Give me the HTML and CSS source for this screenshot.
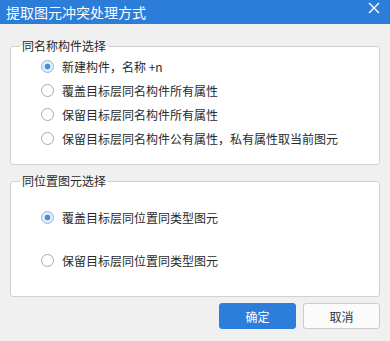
FILE: index.html
```html
<!DOCTYPE html>
<html lang="zh-CN">
<head>
<meta charset="utf-8">
<title>提取图元冲突处理方式</title>
<link rel="stylesheet" href="styles.css">
</head>
<body>
<div class="dialog">
  <div class="titlebar">
    <span class="title">提取图元冲突处理方式</span>
    <svg class="close" width="12" height="12" viewBox="0 0 12 12"><path d="M1 1 L11 11 M11 1 L1 11" stroke="#fff" stroke-width="1.4" fill="none"/></svg>
  </div>
  <div class="body">
    <fieldset class="group group1">
      <legend>同名称构件选择</legend>
      <label class="row"><span class="radio checked"></span><span>新建构件，名称 +n</span></label>
      <label class="row"><span class="radio"></span><span>覆盖目标层同名构件所有属性</span></label>
      <label class="row"><span class="radio"></span><span>保留目标层同名构件所有属性</span></label>
      <label class="row"><span class="radio"></span><span>保留目标层同名构件公有属性，私有属性取当前图元</span></label>
    </fieldset>
    <fieldset class="group group2">
      <legend>同位置图元选择</legend>
      <label class="row"><span class="radio checked"></span><span>覆盖目标层同位置同类型图元</span></label>
      <label class="row"><span class="radio"></span><span>保留目标层同位置同类型图元</span></label>
    </fieldset>
    <div class="buttons">
      <button class="btn primary">确定</button>
      <button class="btn">取消</button>
    </div>
  </div>
</div>
</body>
</html>
```
FILE: styles.css
```css
html, body {
  margin: 0;
  padding: 0;
}
body {
  width: 390px;
  height: 341px;
  background: #f0f0f0;
  font-family: "Noto Sans CJK SC", "Noto Sans", sans-serif;
  color: #2a2a2a;
  overflow: hidden;
}
.titlebar {
  height: 24px;
  background: #2b7dd9;
  display: flex;
  align-items: center;
  justify-content: space-between;
  padding: 0 10px 0 6px;
}
.title {
  color: #fff;
  font-size: 14px;
  line-height: 24px;
}
.close {
  display: block;
  margin-top: -8px;
}
.body {
  padding: 14px 10px 0 10px;
  display: flex;
  flex-direction: column;
}
.group {
  margin: 0;
  border: 1px solid #d0d0d0;
  border-radius: 3px;
  background: #fff;
  padding: 0 10px 0 30px;
  display: flex;
  flex-direction: column;
}
.group legend {
  font-size: 12px;
  line-height: 16px;
  padding: 0 2px;
  margin-left: -21px;
  color: #2a2a2a;
}
.group1 {
  padding-bottom: 14px;
}
.group2 {
  margin-top: 8px;
  padding-top: 16px;
  padding-bottom: 24px;
  gap: 19px;
}
.row {
  display: flex;
  align-items: center;
  height: 24px;
  font-size: 12px;
  gap: 8px;
}
.radio {
  width: 11px;
  height: 11px;
  border: 1px solid #a9a9a9;
  border-radius: 50%;
  background: #fff;
  position: relative;
  flex: none;
}
.radio.checked {
  border-color: #8fb3d9;
  background: radial-gradient(circle, #4a8ed8 0 2.6px, #e4eef9 3.2px);
}
.buttons {
  display: flex;
  justify-content: flex-end;
  gap: 7px;
  margin-top: 6px;
}
.btn {
  width: 77px;
  height: 26px;
  border-radius: 3px;
  font-family: "Noto Sans CJK SC", "Noto Sans", sans-serif;
  font-size: 12px;
  border: 1px solid #cccccc;
  background: #fbfbfb;
  color: #333;
  padding: 0;
}
.btn.primary {
  background: #2d7ddb;
  border-color: #2d7ddb;
  color: #fff;
}
```
